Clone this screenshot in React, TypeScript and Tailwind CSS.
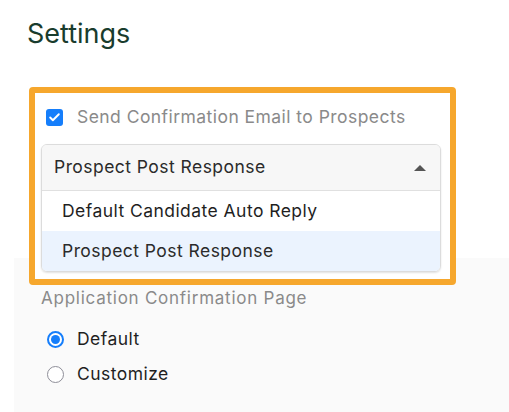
import { Check } from 'lucide-react'

const font = { fontFamily: 'Inter, "Noto Sans", sans-serif' }

export default function App() {
  return (
    <div className="w-[509px] h-[412px] bg-white overflow-hidden" style={font}>
      {/* Header */}
      <h1 className="pl-[27px] pt-[17px] text-[27px] leading-[34px] text-[#193c2d] font-normal">Settings</h1>

      {/* Highlighted email section */}
      <div className="relative z-10 ml-[29px] mt-[36px] w-[427px] h-[198px] border-[6px] border-[#f6a72d] rounded-[4px] bg-white">
        <label className="flex items-center gap-[14px] pl-[11px] pt-[13px]">
          <span className="w-[17px] h-[17px] rounded-[3px] bg-[#157efb] flex items-center justify-center">
            <Check className="w-[13px] h-[13px] text-white" strokeWidth={3.5} />
          </span>
          <span className="text-[17.5px] tracking-[0.45px] leading-[22px] text-[#8a8a8a]">Send Confirmation Email to Prospects</span>
        </label>

        <div className="ml-[6px] mt-[16px] w-[400px] rounded-[6px] border border-[#dcdcdc] shadow-[0_1px_2px_rgba(0,0,0,0.12)] overflow-hidden">
          <div className="h-[46px] bg-[#f7f7f7] flex items-center justify-between pl-[12px] pr-[14px] border-b border-[#e0e0e0]">
            <span className="text-[17.5px] tracking-[0.45px] text-[#2b2b2b]">Prospect Post Response</span>
            <svg width="12" height="6" viewBox="0 0 12 6" className="mt-[1px]">
              <path d="M6 0 L12 6 L0 6 Z" fill="#555" />
            </svg>
          </div>
          <div className="h-[40px] bg-white flex items-center pl-[20px] text-[17.5px] tracking-[0.45px] text-[#1f1f1f]">Default Candidate Auto Reply</div>
          <div className="h-[40px] bg-[#ebf3fe] flex items-center pl-[20px] text-[17.5px] tracking-[0.45px] text-[#2b2b2b]">Prospect Post Response</div>
        </div>
      </div>

      {/* Confirmation page panel */}
      <div className="ml-[14px] mt-[-27px] h-[160px] bg-[#fafafa] pl-[27px] pt-[29px]">
        <p className="text-[17px] tracking-[0.75px] leading-[22px] text-[#8a8a8a]">Application Confirmation Page</p>
        <div className="mt-[21px] flex flex-col gap-[17px]">
          <label className="flex items-center gap-[13px] pl-[6px]">
            <span className="w-[17px] h-[17px] rounded-full border-[2px] border-[#157efb] flex items-center justify-center bg-white">
              <span className="w-[9px] h-[9px] rounded-full bg-[#157efb]" />
            </span>
            <span className="text-[17.5px] tracking-[0.45px] leading-[18px] text-[#1f1f1f]">Default</span>
          </label>
          <label className="flex items-center gap-[13px] pl-[6px]">
            <span className="w-[17px] h-[17px] rounded-full border-[1.5px] border-[#8e8e98] bg-white" />
            <span className="text-[17.5px] tracking-[0.45px] leading-[18px] text-[#1f1f1f]">Customize</span>
          </label>
        </div>
      </div>
    </div>
  )
}
